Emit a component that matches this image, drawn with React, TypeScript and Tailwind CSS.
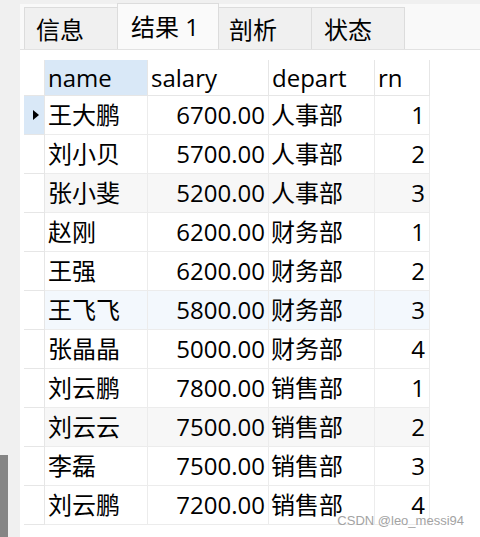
const rows = [
  { name: "王大鹏", salary: "6700.00", depart: "人事部", rn: 1 },
  { name: "刘小贝", salary: "5700.00", depart: "人事部", rn: 2 },
  { name: "张小斐", salary: "5200.00", depart: "人事部", rn: 3 },
  { name: "赵刚", salary: "6200.00", depart: "财务部", rn: 1 },
  { name: "王强", salary: "6200.00", depart: "财务部", rn: 2 },
  { name: "王飞飞", salary: "5800.00", depart: "财务部", rn: 3 },
  { name: "张晶晶", salary: "5000.00", depart: "财务部", rn: 4 },
  { name: "刘云鹏", salary: "7800.00", depart: "销售部", rn: 1 },
  { name: "刘云云", salary: "7500.00", depart: "销售部", rn: 2 },
  { name: "李磊", salary: "7500.00", depart: "销售部", rn: 3 },
  { name: "刘云鹏", salary: "7200.00", depart: "销售部", rn: 4 },
]

const font = { fontFamily: '"Open Sans", "Noto Sans CJK SC", sans-serif' }

function rowBg(i: number) {
  if (i === 5) return "bg-[#f3f8fd]"
  if (i === 2 || i === 8) return "bg-[#f7f7f7]"
  return "bg-white"
}

export default function App() {
  return (
    <div className="relative flex h-[537px] w-[480px] overflow-hidden bg-[#f0f0f0] text-black" style={font}>
      {/* left strip */}
      <div className="flex w-[20px] flex-col justify-end">
        <div className="h-[82px] w-[8px] bg-[#858585]" />
      </div>

      <div className="mt-[4px] flex flex-1 flex-col bg-[#f9f9f9]">
        {/* Tabs */}
        <div className="flex h-[46px] items-end border-b border-[#e2e2e2] pl-[4px] text-[24px] leading-none">
          <div className="flex h-[42px] w-[93px] items-center border-l border-t border-[#dcdcdc] bg-[#f0f0f0] pl-[11px] pt-[2px]">信息</div>
          <div className="flex h-[46px] w-[102px] items-center border-l border-r border-t border-[#dcdcdc] bg-[#fafafa] pl-[13px]">结果 1</div>
          <div className="flex h-[42px] w-[92px] items-center border-t border-[#dcdcdc] bg-[#f0f0f0] pl-[10px] pt-[2px]">剖析</div>
          <div className="flex h-[42px] w-[94px] items-center border-l border-r border-t border-[#dcdcdc] bg-[#f0f0f0] pl-[12px] pt-[2px]">状态</div>
        </div>

        {/* Grid */}
        <div className="flex-1 bg-white pl-[4px] pt-[10px] text-[24px]">
          <div className="flex h-[36px] leading-[35px]">
            <div className="w-[21px] border-b border-r border-[#e6e6e6]" />
            <div className="w-[103px] border-b border-r border-[#e6e6e6] bg-[#d9e8f7] pl-[3px]">name</div>
            <div className="w-[121px] border-b border-r border-[#e6e6e6] pl-[3px]">salary</div>
            <div className="w-[106px] border-b border-r border-[#e6e6e6] pl-[3px]">depart</div>
            <div className="w-[55px] border-b border-r border-[#e6e6e6] pl-[3px]">rn</div>
          </div>
          {rows.map((r, i) => (
            <div key={i} className="flex h-[39px] leading-[38px]">
              <div
                className={
                  i === 0
                    ? "flex w-[21px] items-center justify-center border-b border-r border-[#e6e6e6] bg-[#d9e8f7] pl-[4px]"
                    : "w-[21px] border-b border-r border-[#e6e6e6]"
                }
              >
                {i === 0 && (
                  <svg width="6" height="10" viewBox="0 0 6 10">
                    <path d="M0 0 L6 5 L0 10 Z" fill="#000" />
                  </svg>
                )}
              </div>
              <div className={`w-[103px] border-b border-r border-[#ececec] pl-[3px] ${rowBg(i)}`}>{r.name}</div>
              <div className={`w-[121px] border-b border-r border-[#ececec] pr-[3px] text-right ${rowBg(i)}`}>{r.salary}</div>
              <div className={`w-[106px] border-b border-r border-[#ececec] pl-[2px] ${rowBg(i)}`}>{r.depart}</div>
              <div className={`w-[55px] border-b border-r border-[#ececec] pr-[4px] text-right ${rowBg(i)}`}>{r.rn}</div>
            </div>
          ))}
        </div>
      </div>

      {/* watermark */}
      <div
        className="absolute bottom-[10px] right-[16px] text-[13px] leading-none text-[#a3a3a3]"
        style={{ fontFamily: '"Liberation Sans", Arial, sans-serif' }}
      >
        CSDN @leo_messi94
      </div>
    </div>
  )
}
